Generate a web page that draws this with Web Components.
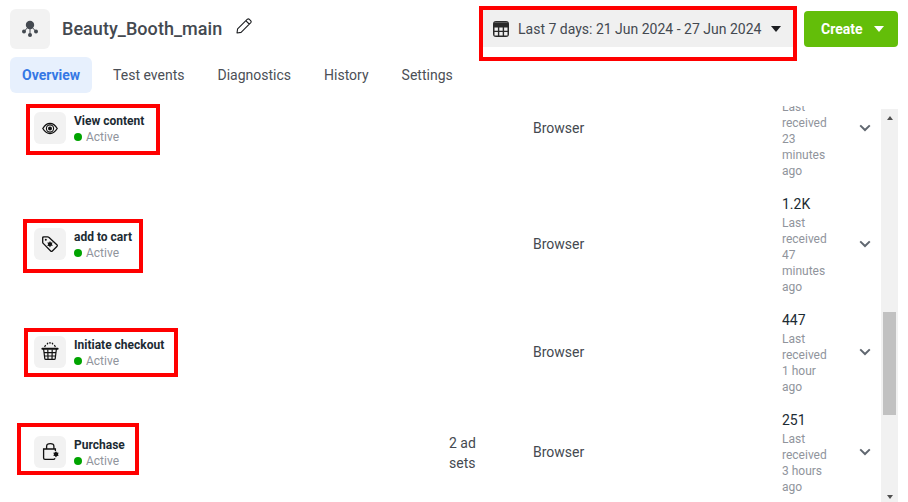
<!DOCTYPE html>
<html><head><meta charset="utf-8"><style>
html,body{margin:0;padding:0;background:#fff}
body{font-family:Roboto,"Liberation Sans",sans-serif;width:908px;height:502px;overflow:hidden;position:relative}
</style></head><body>
<pixel-page>
  <page-header slot="header"></page-header>
  <tab-bar slot="tabs">
    <tab-item active>Overview</tab-item><tab-item>Test events</tab-item><tab-item>Diagnostics</tab-item><tab-item>History</tab-item><tab-item>Settings</tab-item>
  </tab-bar>
  <event-list slot="list">
    <event-row name="View content" icon="eye" source="Browser" detail="Last received 23 minutes ago"></event-row>
    <event-row name="add to cart" icon="tag" source="Browser" count="1.2K" detail="Last received 47 minutes ago"></event-row>
    <event-row name="Initiate checkout" icon="basket" source="Browser" count="447" detail="Last received 1 hour ago"></event-row>
    <event-row name="Purchase" icon="bag" adsets="2 ad sets" source="Browser" count="251" detail="Last received 3 hours ago"></event-row>
  </event-list>
</pixel-page>
<mark-box style="--x:479px;--y:6px;--w:318px;--h:55px"></mark-box>
<mark-box style="--x:26px;--y:104px;--w:134px;--h:51px"></mark-box>
<mark-box style="--x:23px;--y:219px;--w:120px;--h:54px"></mark-box>
<mark-box style="--x:24px;--y:328px;--w:154px;--h:49px"></mark-box>
<mark-box style="--x:17px;--y:423px;--w:122px;--h:52px"></mark-box>
<script>
const ICONS={
eye:'<path d="M.8 8.5C2.8 5.2 5.2 3.4 8 3.4S13.2 5.2 15.2 8.5C13.2 11.8 10.8 13.6 8 13.6S2.8 11.8.8 8.5Z" fill="none" stroke="#111" stroke-width="1.3"/><circle cx="8" cy="8.5" r="3.6" fill="none" stroke="#111" stroke-width="1.1"/><circle cx="8" cy="8.5" r="2" fill="#111"/>',
tag:'<path d="M1.8.8H5.6q.7 0 1.2.5l8.3 7.7q.5.6 0 1.2l-5 5q-.6.5-1.2 0L1.2 7.4q-.5-.5-.5-1.2V1.9Q.7.8 1.8.8Z" fill="none" stroke="#111" stroke-width="1.3"/><circle cx="3.8" cy="3.8" r="1" fill="#111"/><path d="M8 4.9l.8 1.7 1.9-.1-.9 1.6 1 1.6-1.9.1-.9 1.7-.9-1.6-1.9-.1 1-1.6-.9-1.7 1.9 0Z" fill="#111"/>',
basket:'<path d="M8-2v1.8M6-1.2 5 .4M10-1.2l1 1.6M3.6 1 2.6 3M12.4 1l1 2" stroke="#111" stroke-width="1.2" fill="none"/><path d="M.4 4.8h15.2" stroke="#111" stroke-width="2" stroke-linecap="round"/><path d="M1.6 5 2.8 14.6q.1.8.9.8h8.6q.8 0 .9-.8L14.4 5M2.1 8.6h11.8M2.5 12h11M5.8 5.4 6 15M10.2 5.4 10 15" stroke="#111" stroke-width="1.2" fill="none"/>',
bag:'<path d="M13.4 7V5H1.6v9q0 1.4 1.4 1.4h8.4q1.2 0 1.6-1.2" fill="none" stroke="#111" stroke-width="1.3"/><path d="M4.6 5V2.4Q4.6-.4 8.3-.4t3.6 2.8V5" fill="none" stroke="#111" stroke-width="1.3"/><path d="M14 7.2l.9 1.4 1.7.1-.6 1.6.6 1.5-1.7.2-.9 1.4-1.1-1.3-1.6-.3.7-1.5-.7-1.5 1.6-.3Z" fill="#111"/>'
};
function def(tag,html,init){customElements.define(tag,class extends HTMLElement{constructor(){super();this.attachShadow({mode:'open'})}connectedCallback(){this.shadowRoot.innerHTML=typeof html==='function'?html(this):html;init&&init(this)}})}
def('pixel-page',`<style>:host{display:flex;flex-direction:column;width:908px;height:502px;overflow:hidden}
.body{display:flex;flex:1;min-height:0;margin-top:13px}</style>
<slot name="header"></slot><slot name="tabs"></slot><div class="body"><slot name="list"></slot><scroll-track></scroll-track></div>`);
def('page-header',`<style>:host{display:flex;height:57px;box-sizing:border-box;padding:9px 10px 0;align-items:flex-start}
.ico{width:40px;height:40px;border-radius:6px;background:#f2f2f2;display:flex;align-items:center;justify-content:center}
h1{margin:0 0 0 12px;font:500 18px/40px Roboto,sans-serif;color:#444950;letter-spacing:.05px}
.pen{margin:9px 0 0 14px;display:block}
.sp{flex:1}
.date{display:flex;align-items:center;height:37px;margin-top:1px;box-sizing:border-box;width:310px;background:#f0f0f0;padding-left:10px;font:400 14px Roboto,sans-serif;color:#444950}
.date span{margin-left:9px}
.caret{width:0;height:0;border:5px solid transparent;border-top:6px solid #1c1e21;border-bottom:0}
.date .caret{margin-left:10px}
.create{display:flex;align-items:center;height:36px;width:94px;box-sizing:border-box;margin:2px 0 0 11px;padding-left:17px;background:#63be09;border-radius:4px;color:#fff;font:700 14px Roboto,sans-serif}
.create .caret{margin-left:11px;border-top-color:#fff}
</style>
<div class="ico"><svg width="20" height="20" viewBox="0 0 20 20"><path d="M10 6 4 12.5M10 6 16 12.5M10 6V16" stroke="#444950" stroke-width="1" fill="none"/><circle cx="10" cy="6" r="4.2" fill="#444950"/><circle cx="4" cy="12.5" r="2" fill="#444950"/><circle cx="16" cy="12.5" r="2" fill="#444950"/><circle cx="10" cy="16" r="2" fill="#444950"/></svg></div>
<h1>Beauty_Booth_main</h1>
<svg class="pen" width="16" height="16" viewBox="0 0 16 16"><path d="M1 15 1.6 10.8 11.4 1.2q.9-.7 1.8 0l1.6 1.6q.7.9 0 1.8L5.1 14.4ZM10 2.8l3.2 3.2" fill="none" stroke="#1c1e21" stroke-width="1.1" stroke-linejoin="round"/></svg>
<div class="sp"></div>
<div class="date"><svg width="16" height="16" viewBox="0 0 16 16"><rect width="16" height="16" rx="3" fill="#2a2a2a"/><path d="M1.5 1.4h13" stroke="#8a8a8a" stroke-width=".6"/><path d="M1.5 6.5h3.4v3.2H1.5ZM6.3 6.5h3.4v3.2H6.3ZM11.1 6.5h3.4v3.2h-3.4ZM1.5 11h3.4v3.5H1.5ZM6.3 11h3.4v3.5H6.3ZM11.1 11h3.4v3.5h-3.4Z" fill="#f0f0f0"/></svg><span>Last 7 days: 21 Jun 2024 - 27 Jun 2024</span><i class="caret"></i></div>
<div class="create">Create<i class="caret"></i></div>`);
def('tab-bar',`<style>:host{display:flex;padding-left:10px;gap:9px;height:36px}</style><slot></slot>`);
def('tab-item',`<style>:host{display:block;padding:0 12px;border-radius:6px;font:400 14px/36px Roboto,sans-serif;color:#4b4f56}
:host([active]){background:#e7f0fd;color:#3578e5;font-weight:700}</style><slot></slot>`);
def('event-list',`<style>:host{display:block;flex:1;min-width:0;overflow:hidden}
.in{display:flex;flex-direction:column;gap:13px;margin-top:-30px}</style><div class="in"><slot></slot></div>`);
def('event-row',el=>{const g=n=>el.getAttribute(n)||'';return `<style>:host{display:block}
.r{display:grid;grid-template-columns:415px 84px 249px 77px 1fr;align-items:center;padding-left:34px;font:400 14px/20px Roboto,sans-serif;color:#444950}
.nm{display:flex;align-items:center}
.ico{width:32px;height:32px;border-radius:6px;background:#f2f2f2;display:flex;align-items:center;justify-content:center;margin-right:8px}
.ico svg{overflow:visible}
.tx{margin-top:2px}
.t{font:700 12px/16px Roboto,sans-serif;color:#1c2b33}
.a{display:flex;align-items:center;font:400 12px/16px Roboto,sans-serif;color:#90949c}
.a i{width:8px;height:8px;border-radius:50%;background:#00a400;margin-right:4px}
.ad{width:45px;margin-top:2px}
.m{width:52px;margin-top:2px}
.c{min-height:21px;color:#1c2b33;line-height:20px}
.d{font:400 12px/16px Roboto,sans-serif;color:#90949c}
svg.chev{display:block}
</style><div class="r"><div class="nm"><div class="ico"><svg width="16" height="16" viewBox="0 0 16 16">${ICONS[g('icon')]}</svg></div><div class="tx"><div class="t">${g('name')}</div><div class="a"><i></i>Active</div></div></div>
<div class="ad">${g('adsets')}</div><div>${g('source')}</div>
<div class="m"><div class="c">${g('count')}</div><div class="d">${g('detail')}</div></div>
<svg class="chev" width="12" height="8" viewBox="0 0 12 8"><path d="M1.2 1.4 6 6l4.8-4.6" fill="none" stroke="#606770" stroke-width="2"/></svg></div>`});
def('scroll-track',`<style>:host{display:flex;flex-direction:column;box-sizing:border-box;width:17px;margin:3px 10px 0 0;background:#f1f1f1;align-items:center;flex:none}
.u{width:0;height:0;border:3.5px solid transparent;border-bottom:4px solid #505050;border-top:0;margin-top:7px}
.th{width:13px;height:103px;background:#c1c1c1;margin-top:192px}
.d{width:0;height:0;border:3.5px solid transparent;border-top:4px solid #505050;border-bottom:0;margin-top:auto;margin-bottom:3px}</style>
<i class="u"></i><div class="th"></div><i class="d"></i>`);
def('mark-box',`<style>:host{position:absolute;left:var(--x);top:var(--y);width:var(--w);height:var(--h);box-sizing:border-box;border:4px solid #f00;pointer-events:none}</style>`);
</script>
</body></html>
